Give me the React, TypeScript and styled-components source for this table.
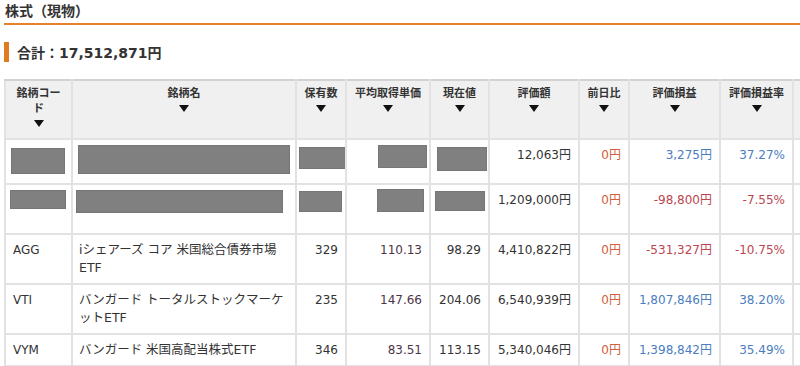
import React from "react";
import styled, { createGlobalStyle } from "styled-components";

const Global = createGlobalStyle`
  html, body { margin: 0; padding: 0; background: #fff; overflow: hidden; }
  body { font-family: "DejaVu Sans", "Noto Sans CJK JP", sans-serif; color: #333; }
`;

const Page = styled.div`
  width: 800px;
  height: 366px;
  overflow: hidden;
  padding-left: 4px;
  box-sizing: border-box;
`;

const Title = styled.h2`
  margin: 0;
  padding: 0 0 3px 1px;
  font-family: "Noto Sans CJK JP", sans-serif;
  font-size: 14px;
  font-weight: 700;
  line-height: 20px;
  color: #333;
  border-bottom: 2px solid #e8822a;
`;

const Total = styled.div`
  margin-top: 17px;
  height: 20px;
  display: flex;
  align-items: center;
  gap: 8px;
  font-size: 14px;
  font-weight: 700;
  color: #333;
`;

const TotalBar = styled.span`
  width: 5px;
  height: 20px;
  background: #e07b22;
`;

const Table = styled.table`
  margin-top: 17px;
  border-collapse: collapse;
  table-layout: fixed;
  width: 868px;
  font-size: 12px;
`;

const Col = styled.col<{ $w: number }>`
  width: ${(p) => p.$w}px;
`;

const Th = styled.th`
  background: #f0f0f0;
  border: 2px solid #e2e2e2;
  border-top-color: #d2d2d2;
  padding: 5px 6px 11px;
  font-size: 11px;
  font-weight: 700;
  line-height: 15px;
  vertical-align: top;
  text-align: center;
  color: #333;
`;

const Sort = styled.span`
  display: block;
  width: 0;
  height: 0;
  margin: 4px auto 0;
  border-left: 5px solid transparent;
  border-right: 5px solid transparent;
  border-top: 7px solid #111;
`;

type Tone = "plain" | "zero" | "pos" | "neg" | "avg";
const toneColor: Record<Tone, string> = {
  plain: "#333",
  zero: "#cf603b",
  pos: "#4b7dc0",
  neg: "#bb4650",
  avg: "#4d3548",
};

const Td = styled.td<{ $right?: boolean; $tone?: Tone; $wide?: boolean }>`
  border: 2px solid #e2e2e2;
  padding: ${(p) => (p.$wide ? "6px 10px 6px 6px" : "6px 7px")};
  font-size: ${(p) => (p.$wide ? "12.5px" : "12px")};
  line-height: 18px;
  vertical-align: top;
  text-align: ${(p) => (p.$right ? "right" : "left")};
  color: ${(p) => toneColor[p.$tone || "plain"]};
  white-space: normal;
`;

const Redact = styled.div<{ $w: number; $h: number; $m: string }>`
  width: ${(p) => p.$w}px;
  height: ${(p) => p.$h}px;
  margin: ${(p) => p.$m};
  background: #808080;
  box-shadow: inset 0 0 0 1px #767676;
`;

const SideLink = styled.span`
  color: #e0922a;
  font-size: 11px;
  line-height: 13px;
  display: block;
  margin-top: 2px;
`;

type Box = [number, number, string];

const headers: { label: string; w: number }[] = [
  { label: "銘柄コード", w: 67 },
  { label: "銘柄名", w: 224 },
  { label: "保有数", w: 50 },
  { label: "平均取得単価", w: 84 },
  { label: "現在値", w: 59 },
  { label: "評価額", w: 90 },
  { label: "前日比", w: 50 },
  { label: "評価損益", w: 91 },
  { label: "評価損益率", w: 73 },
];

const hiddenRows: { boxes: Box[]; value: string; day: string; gain: string; rate: string; neg: boolean; side?: boolean }[] = [
  {
    boxes: [
      [54, 26, "2px 0 0 -2px"],
      [212, 29, "-1px 0 3px -1px"],
      [47, 22, "1px 0 0 -5px"],
      [49, 23, "-1px 0 0 24px"],
      [50, 24, "1px 0 0 -1px"],
    ],
    value: "12,063円",
    day: "0円",
    gain: "3,275円",
    rate: "37.27%",
    neg: false,
  },
  {
    boxes: [
      [56, 19, "-1px 0 0 -3px"],
      [207, 23, "-1px 0 14px -3px"],
      [43, 21, "0 0 0 -5px"],
      [47, 23, "-2px 0 0 23px"],
      [50, 20, "0 0 0 -3px"],
    ],
    value: "1,209,000円",
    day: "0円",
    gain: "-98,800円",
    rate: "-7.55%",
    neg: true,
    side: true,
  },
];

const rows = [
  { code: "AGG", name: "iシェアーズ コア 米国総合債券市場ETF", qty: "329", avg: "110.13", now: "98.29", value: "4,410,822円", gain: "-531,327円", rate: "-10.75%", neg: true },
  { code: "VTI", name: "バンガード トータルストックマーケットETF", qty: "235", avg: "147.66", now: "204.06", value: "6,540,939円", gain: "1,807,846円", rate: "38.20%", neg: false },
  { code: "VYM", name: "バンガード 米国高配当株式ETF", qty: "346", avg: "83.51", now: "113.15", value: "5,340,046円", gain: "1,398,842円", rate: "35.49%", neg: false },
];

export default function App() {
  return (
    <Page>
      <Global />
      <Title>株式（現物）</Title>
      <Total>
        <TotalBar />
        <span>合計：17,512,871円</span>
      </Total>
      <Table>
        <colgroup>
          {headers.map((h) => (
            <Col key={h.label} $w={h.w} />
          ))}
          <Col $w={80} />
        </colgroup>
        <thead>
          <tr>
            {headers.map((h) => (
              <Th key={h.label}>
                {h.label}
                <Sort />
              </Th>
            ))}
            <Th />
          </tr>
        </thead>
        <tbody>
          {hiddenRows.map((r, i) => (
            <tr key={"h" + i}>
              {r.boxes.map((b, j) => (
                <Td key={j} $wide={j === 1}>
                  <Redact $w={b[0]} $h={b[1]} $m={b[2]} />
                </Td>
              ))}
              <Td $right>{r.value}</Td>
              <Td $right $tone="zero">{r.day}</Td>
              <Td $right $tone={r.neg ? "neg" : "pos"}>{r.gain}</Td>
              <Td $right $tone={r.neg ? "neg" : "pos"}>{r.rate}</Td>
              <Td>
                {r.side && (
                  <>
                    <SideLink>買増</SideLink>
                    <SideLink>売却</SideLink>
                  </>
                )}
              </Td>
            </tr>
          ))}
          {rows.map((r) => (
            <tr key={r.code}>
              <Td>{r.code}</Td>
              <Td $wide>{r.name}</Td>
              <Td $right>{r.qty}</Td>
              <Td $right $tone="avg">{r.avg}</Td>
              <Td $right>{r.now}</Td>
              <Td $right>{r.value}</Td>
              <Td $right $tone="zero">0円</Td>
              <Td $right $tone={r.neg ? "neg" : "pos"}>{r.gain}</Td>
              <Td $right $tone={r.neg ? "neg" : "pos"}>{r.rate}</Td>
              <Td />
            </tr>
          ))}
        </tbody>
      </Table>
    </Page>
  );
}
